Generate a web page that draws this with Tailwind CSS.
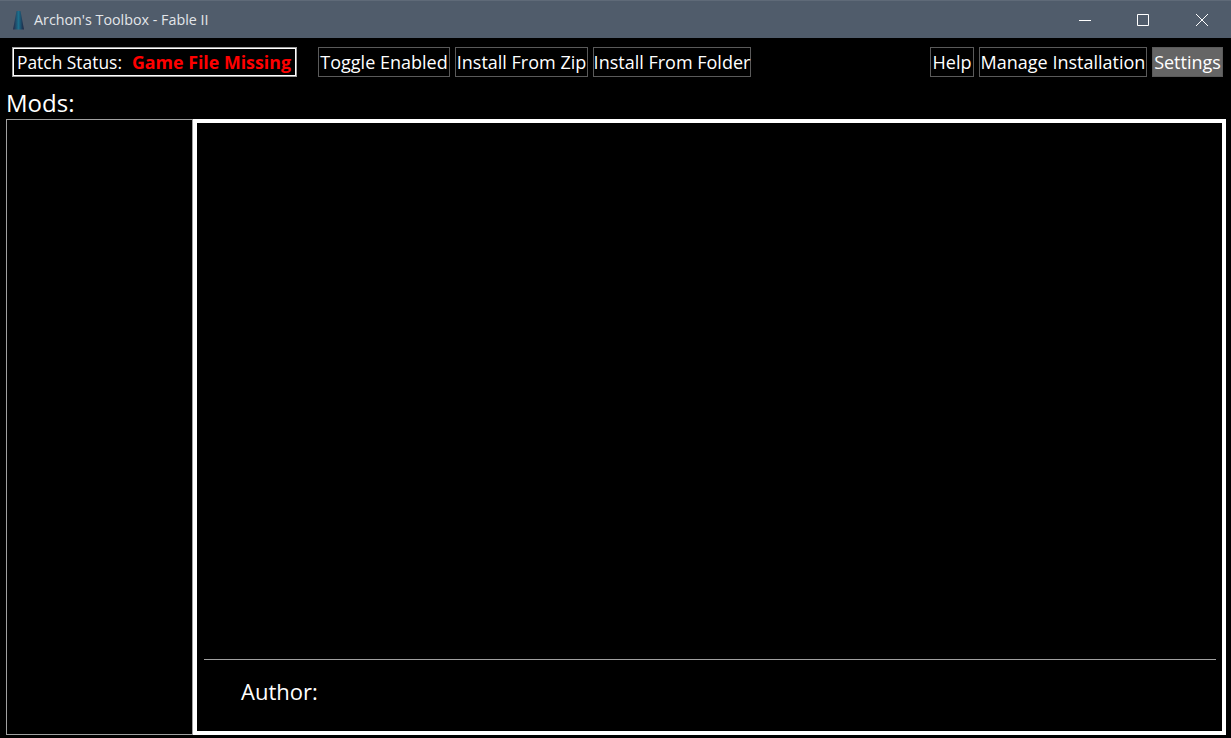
<!DOCTYPE html>
<html lang="en">
<head>
<meta charset="utf-8">
<title>Archon's Toolbox - Fable II</title>
<script src="https://cdn.jsdelivr.net/npm/@tailwindcss/browser@4"></script>
</head>
<body class="bg-black">
<div class="w-[1231px] h-[738px] overflow-hidden flex flex-col bg-black text-white font-['Open_Sans',sans-serif]">
  <!-- title bar -->
  <div class="h-[38px] shrink-0 flex items-center bg-[#505c6b] border-t border-[#5f6a78]">
    <svg class="ml-[12px] w-[13px] h-[20px]" viewBox="0 0 13 20">
      <defs>
        <linearGradient id="tower" x1="0" x2="1" y1="0" y2="0">
          <stop offset="0" stop-color="#242847"/>
          <stop offset="0.5" stop-color="#1c6f8c"/>
          <stop offset="1" stop-color="#1e2240"/>
        </linearGradient>
      </defs>
      <path d="M4.5 1H8.5L12 19.5H1Z" fill="url(#tower)"/>
    </svg>
    <span class="ml-[9px] text-[14.3px] text-[#e3e6ea]">Archon's Toolbox - Fable II</span>
    <div class="ml-auto flex items-center">
      <div class="w-[58px] h-[36px] flex items-center justify-center">
        <svg class="w-[12px] h-[12px]" viewBox="0 0 12 12"><path d="M0 6.5H12" stroke="#fff"/></svg>
      </div>
      <div class="w-[58px] h-[36px] flex items-center justify-center">
        <svg class="w-[12px] h-[12px]" viewBox="0 0 12 12"><path d="M.5.5H11.5V11.5H.5Z" fill="none" stroke="#fff"/></svg>
      </div>
      <div class="w-[59px] h-[36px] flex items-center justify-center">
        <svg class="w-[12px] h-[12px]" viewBox="0 0 12 12"><path d="M0 0L12 12M12 0L0 12" stroke="#fff"/></svg>
      </div>
    </div>
  </div>

  <!-- toolbar -->
  <div class="h-[30px] mt-[9px] shrink-0 flex items-stretch text-[18px] leading-none whitespace-nowrap">
    <div class="ml-[12px] w-[285px] pt-[2px] flex items-center border border-[#a0a0a0] shadow-[inset_0_0_0_1px_#ffffff] pl-[4px]">
      <span class="text-[17.4px]">Patch Status:</span>
      <span class="ml-[10px] font-bold text-[#ff0000] text-[17.8px]">Game File Missing</span>
    </div>
    <div class="ml-[21px] w-[132px] flex items-center justify-center border border-[#5a5a5a]">Toggle Enabled</div>
    <div class="ml-[5px] w-[133px] flex items-center justify-center border border-[#5a5a5a]">Install From Zip</div>
    <div class="ml-[5px] w-[158px] flex items-center justify-center border border-[#5a5a5a]">Install From Folder</div>
    <div class="ml-auto w-[44px] flex items-center justify-center border border-[#5a5a5a]">Help</div>
    <div class="ml-[5px] w-[168px] flex items-center justify-center border border-[#5a5a5a]">Manage Installation</div>
    <div class="ml-[5px] mr-[8px] w-[71px] flex items-center justify-center border border-[#5a5a5a] bg-[#656565]">Settings</div>
  </div>

  <div class="h-[42px] shrink-0 pl-[6px] pt-[9px] flex items-center text-[24px] leading-none">Mods:</div>

  <!-- main -->
  <div class="h-[616px] ml-[6px] mr-[5px] flex">
    <div class="w-[187px] shrink-0 border border-[#a0a0a0]"></div>
    <div class="flex-1 flex flex-col border-[4px] border-white">
      <div class="flex-1"></div>
      <div class="ml-[7px] mr-[6px] h-px bg-[#a0a0a0]"></div>
      <div class="h-[71px] pl-[44px] pb-[10px] flex items-center text-[22px] leading-none">Author:</div>
    </div>
  </div>
</div>
</body>
</html>
